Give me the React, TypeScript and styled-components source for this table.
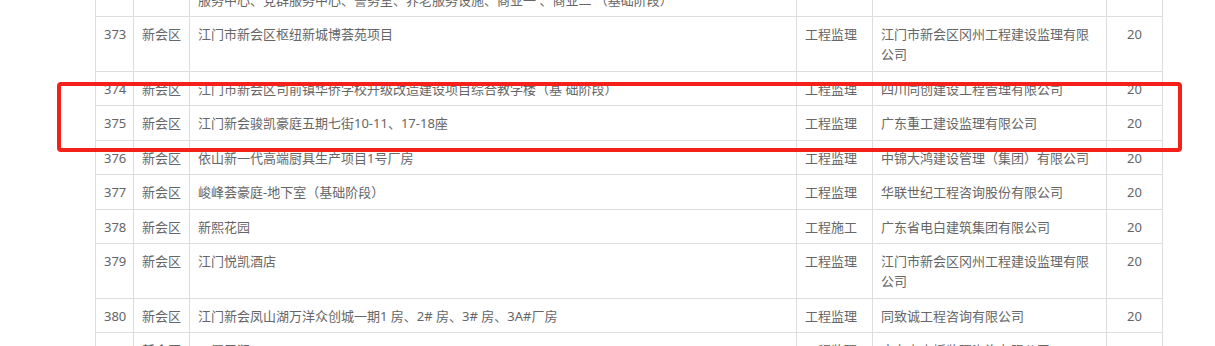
import styled, { createGlobalStyle } from "styled-components";

const GlobalStyle = createGlobalStyle`
  html, body {
    margin: 0;
    padding: 0;
    background: #fff;
    overflow: hidden;
  }
  body {
    font-family: "Noto Sans", "Noto Sans CJK SC", sans-serif;
  }
`;

const Page = styled.div`
  position: relative;
  width: 1215px;
  height: 346px;
  overflow: hidden;
`;

const Table = styled.table`
  margin: -38.5px 0 0 95px;
  width: 1067px;
  table-layout: fixed;
  border-collapse: collapse;
  font-size: 13px;
  line-height: 20px;
  color: #666;
`;

const Col = styled.col<{ $w: number }>`
  width: ${(p) => p.$w}px;
`;

const Cell = styled.td<{ $center?: boolean }>`
  border: 1px solid #ddd;
  padding: 7px 8px 6.5px;
  vertical-align: top;
  text-align: ${(p) => (p.$center ? "center" : "left")};
  white-space: ${(p) => (p.$center ? "nowrap" : "pre-line")};
  word-break: break-all;
`;

const Highlight = styled.div`
  position: absolute;
  left: 57px;
  top: 82px;
  width: 1125px;
  height: 70px;
  box-sizing: border-box;
  border: 4px solid #f5201a;
  border-radius: 4px;
  pointer-events: none;
`;

type Row = {
  no: number;
  area: string;
  name: string;
  kind: string;
  company: string;
  score: number;
};

const widths = [38, 56, 607, 76, 234, 56];

const rows: Row[] = [
  {
    no: 372,
    area: "新会区",
    name: "江门市新会区会城街道综合服务中心项目（含社区卫生服务中心、文化活动中心、\n服务中心、党群服务中心、警务室、养老服务设施、商业一 、商业二 （基础阶段）",
    kind: "工程监理",
    company: "广东建设工程监理有限公司",
    score: 20,
  },
  {
    no: 373,
    area: "新会区",
    name: "江门市新会区枢纽新城博荟苑项目",
    kind: "工程监理",
    company: "江门市新会区冈州工程建设监理有限公司",
    score: 20,
  },
  {
    no: 374,
    area: "新会区",
    name: "江门市新会区司前镇华侨学校升级改造建设项目综合教学楼（基 础阶段）",
    kind: "工程监理",
    company: "四川同创建设工程管理有限公司",
    score: 20,
  },
  {
    no: 375,
    area: "新会区",
    name: "江门新会骏凯豪庭五期七街10-11、17-18座",
    kind: "工程监理",
    company: "广东重工建设监理有限公司",
    score: 20,
  },
  {
    no: 376,
    area: "新会区",
    name: "依山新一代高端厨具生产项目1号厂房",
    kind: "工程监理",
    company: "中锦大鸿建设管理（集团）有限公司",
    score: 20,
  },
  {
    no: 377,
    area: "新会区",
    name: "峻峰荟豪庭-地下室（基础阶段）",
    kind: "工程监理",
    company: "华联世纪工程咨询股份有限公司",
    score: 20,
  },
  {
    no: 378,
    area: "新会区",
    name: "新熙花园",
    kind: "工程施工",
    company: "广东省电白建筑集团有限公司",
    score: 20,
  },
  {
    no: 379,
    area: "新会区",
    name: "江门悦凯酒店",
    kind: "工程监理",
    company: "江门市新会区冈州工程建设监理有限公司",
    score: 20,
  },
  {
    no: 380,
    area: "新会区",
    name: "江门新会凤山湖万洋众创城一期1 房、2# 房、3# 房、3A#厂房",
    kind: "工程监理",
    company: "同致诚工程咨询有限公司",
    score: 20,
  },
  {
    no: 381,
    area: "新会区",
    name: "工展三涧",
    kind: "工程监理",
    company: "广东上山坂监理咨询有限公司",
    score: 20,
  },
];

const App = () => {
  return (
    <Page>
      <GlobalStyle />
      <Table>
        <colgroup>
          {widths.map((w, i) => (
            <Col key={i} $w={w} />
          ))}
        </colgroup>
        <tbody>
          {rows.map((r) => (
            <tr key={r.no}>
              <Cell $center>{r.no}</Cell>
              <Cell>{r.area}</Cell>
              <Cell>{r.name}</Cell>
              <Cell>{r.kind}</Cell>
              <Cell>{r.company}</Cell>
              <Cell $center>{r.score}</Cell>
            </tr>
          ))}
        </tbody>
      </Table>
      <Highlight />
    </Page>
  );
};

export default App;
